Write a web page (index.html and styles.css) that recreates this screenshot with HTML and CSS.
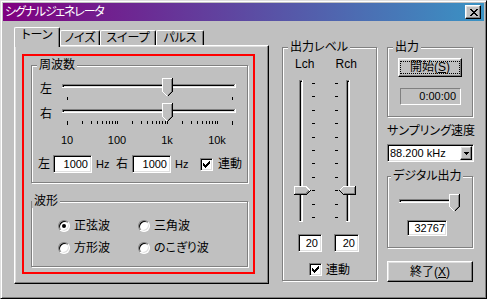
FILE: index.html
```html
<!DOCTYPE html>
<html>

	<head>
		<meta charset="UTF-8">
		<title>シグナルジェネレータ</title>
		<link rel="stylesheet" href="styles.css">
	</head>

	<body>
		<div class="window">
			<!--タイトルバー-->
			<div class="titlebar">
				<span class="title">シグナルジェネレータ</span>
				<span class="close-btn">
					<svg width="8" height="7" viewBox="0 0 8 7" shape-rendering="crispEdges"><path d="M0 0h2v1H0zM6 0h2v1H6zM1 1h2v1H1zM5 1h2v1H5zM2 2h4v1H2zM3 3h2v1H3zM2 4h4v1H2zM1 5h2v1H1zM5 5h2v1H5zM0 6h2v1H0zM6 6h2v1H6z" fill="#000"/></svg>
				</span>
			</div>
			<div class="client">
				<!--タブ-->
				<div class="tabctl">
					<div class="tabs">
						<div class="tab tab-tone">トーン</div>
						<div class="tab tab-noise">ノイズ</div>
						<div class="tab tab-sweep">スイープ</div>
						<div class="tab tab-pulse">パルス</div>
					</div>
					<div class="panel">
						<div class="redbox">
							<div class="group freq">
								<div class="group-title">周波数</div>
								<div class="slider-row">
									<span class="slider-label">左</span>
									<svg class="slider" width="182" height="25" shape-rendering="crispEdges">
										<rect x="4" y="8" width="174" height="4" fill="#fff"/>
										<rect x="4" y="8" width="173" height="3" fill="#808080"/>
										<rect x="5" y="9" width="172" height="2" fill="#dfdfdf"/>
										<rect x="5" y="9" width="171" height="1" fill="#000"/>
										<rect x="5" y="9" width="1" height="2" fill="#000"/>
										<g transform="translate(104 2)">
											<path d="M0 0H11V13L5.5 18.5L0 13Z" fill="#c0c0c0"/>
											<path d="M0.5 13.5V0.5H10" fill="none" stroke="#fff"/>
											<path d="M0.5 13.5L5 18" fill="none" stroke="#fff"/>
											<path d="M9.5 1V13.5L5.5 17.5" fill="none" stroke="#808080"/>
											<path d="M10.5 0V13.5L5.5 18.5" fill="none" stroke="#000"/>
										</g>
										<path d="M9.5 21v3M174.5 21v3" stroke="#000"/>
									</svg>
								</div>
								<div class="slider-row">
									<span class="slider-label">右</span>
									<svg class="slider" width="182" height="25" shape-rendering="crispEdges">
										<rect x="4" y="8" width="174" height="4" fill="#fff"/>
										<rect x="4" y="8" width="173" height="3" fill="#808080"/>
										<rect x="5" y="9" width="172" height="2" fill="#dfdfdf"/>
										<rect x="5" y="9" width="171" height="1" fill="#000"/>
										<rect x="5" y="9" width="1" height="2" fill="#000"/>
										<path d="M9.5 20v4M174.5 20v4M24.5 20v3M33.5 20v3M39.5 20v3M44.5 20v3M48.5 20v3M51.5 20v3M54.5 20v3M57.5 20v3M59.5 20v3M74.5 20v3M83.5 20v3M89.5 20v3M94.5 20v3M98.5 20v3M101.5 20v3M104.5 20v3M107.5 20v3M109.5 20v3M124.5 20v3M133.5 20v3M139.5 20v3M144.5 20v3M148.5 20v3M151.5 20v3M154.5 20v3M157.5 20v3M159.5 20v3" stroke="#000"/>
										<g transform="translate(104 2)">
											<path d="M0 0H11V13L5.5 18.5L0 13Z" fill="#c0c0c0"/>
											<path d="M0.5 13.5V0.5H10" fill="none" stroke="#fff"/>
											<path d="M0.5 13.5L5 18" fill="none" stroke="#fff"/>
											<path d="M9.5 1V13.5L5.5 17.5" fill="none" stroke="#808080"/>
											<path d="M10.5 0V13.5L5.5 18.5" fill="none" stroke="#000"/>
										</g>
									</svg>
								</div>
								<div class="scale">
									<span>10</span>
									<span>100</span>
									<span>1k</span>
									<span>10k</span>
								</div>
								<div class="freq-inputs">
									<span class="lbl-l">左</span>
									<span class="edit edit-freq">1000</span>
									<span class="unit unit-l">Hz</span>
									<span class="lbl-r">右</span>
									<span class="edit edit-freq">1000</span>
									<span class="unit unit-r">Hz</span>
									<span class="check">
										<svg width="9" height="9" shape-rendering="crispEdges"><path d="M1 3h1v3H1zM2 4h1v3H2zM3 5h1v3H3zM4 4h1v3H4zM5 3h1v3H5zM6 2h1v3H6zM7 1h1v3H7z" fill="#000"/></svg>
									</span>
									<span class="check-label">連動</span>
								</div>
							</div>
							<div class="group wave">
								<div class="group-title">波形</div>
								<div class="radio-row">
									<div class="radio-item"><span class="radio"><span class="dot"></span></span>正弦波</div>
									<div class="radio-item"><span class="radio"></span>三角波</div>
								</div>
								<div class="radio-row">
									<div class="radio-item"><span class="radio"></span>方形波</div>
									<div class="radio-item"><span class="radio"></span>のこぎり波</div>
								</div>
							</div>
						</div>
					</div>
				</div>

				<!--出力レベル-->
				<div class="group level">
					<div class="group-title">出力レベル</div>
					<div class="ch-labels">
						<span>Lch</span>
						<span>Rch</span>
					</div>
					<svg class="level-svg" width="72" height="150" shape-rendering="crispEdges">
						<rect x="9" y="4" width="4" height="142" fill="#fff"/>
						<rect x="9" y="4" width="3" height="141" fill="#808080"/>
						<rect x="10" y="5" width="2" height="140" fill="#dfdfdf"/>
						<rect x="10" y="5" width="1" height="140" fill="#000"/>
						<rect x="10" y="5" width="2" height="1" fill="#000"/>
						<rect x="56" y="4" width="4" height="142" fill="#fff"/>
						<rect x="56" y="4" width="3" height="141" fill="#808080"/>
						<rect x="57" y="5" width="2" height="140" fill="#dfdfdf"/>
						<rect x="57" y="5" width="1" height="140" fill="#000"/>
						<rect x="57" y="5" width="2" height="1" fill="#000"/>
						<path d="M22 7.5h3M22 20.5h3M22 34.5h3M22 47.5h3M22 61.5h3M22 74.5h3M22 87.5h3M22 101.5h3M22 114.5h3M22 128.5h3M22 141.5h3" stroke="#000"/>
						<path d="M45 7.5h3M45 20.5h3M45 34.5h3M45 47.5h3M45 61.5h3M45 74.5h3M45 87.5h3M45 101.5h3M45 114.5h3M45 128.5h3M45 141.5h3" stroke="#000"/>
						<g transform="translate(4 110)">
							<path d="M0 0H12L16.5 4.5L12 9H0Z" fill="#c0c0c0"/>
							<path d="M0.5 8.5V0.5H12L16 4.5" fill="none" stroke="#fff"/>
							<path d="M1 7.5H12L15 4.5" fill="none" stroke="#808080"/>
							<path d="M0 8.5H12.5L16.5 4.5" fill="none" stroke="#000"/>
						</g>
						<g transform="translate(49 110)">
							<path d="M0.5 4.5L5 0H17V9H5Z" fill="#c0c0c0"/>
							<path d="M0.5 4.5L4.5 0.5H16" fill="none" stroke="#fff"/>
							<path d="M15.5 1V7.5H5" fill="none" stroke="#808080"/>
							<path d="M16.5 0V8.5H4.5L0.5 4.5" fill="none" stroke="#000"/>
						</g>
					</svg>
					<div class="level-vals">
						<span class="edit edit-lv">20</span>
						<span class="edit edit-lv edit-lv-r">20</span>
					</div>
					<div class="level-link">
						<span class="check">
							<svg width="9" height="9" shape-rendering="crispEdges"><path d="M1 3h1v3H1zM2 4h1v3H2zM3 5h1v3H3zM4 4h1v3H4zM5 3h1v3H5zM6 2h1v3H6zM7 1h1v3H7z" fill="#000"/></svg>
						</span>
						<span class="check-label">連動</span>
					</div>
				</div>

				<!--右側-->
				<div class="side">
					<div class="group out">
						<div class="group-title">出力</div>
						<div class="btn btn-start"><span class="focus">開始(<u>S</u>)</span></div>
						<div class="timebox">0:00:00</div>
					</div>
					<div class="rate-label">サンプリング速度</div>
					<div class="combo">
						<span class="combo-text">88.200 kHz</span>
						<span class="combo-btn">
							<svg width="5" height="3" shape-rendering="crispEdges"><path d="M0 0h5v1H0zM1 1h3v1H1zM2 2h1v1H2z" fill="#000"/></svg>
						</span>
					</div>
					<div class="group digital">
						<div class="group-title">デジタル出力</div>
						<svg class="digital-svg" width="66" height="20" shape-rendering="crispEdges">
							<rect x="3" y="7" width="59" height="4" fill="#fff"/>
							<rect x="3" y="7" width="58" height="3" fill="#808080"/>
							<rect x="4" y="8" width="57" height="2" fill="#dfdfdf"/>
							<rect x="4" y="8" width="56" height="1" fill="#000"/>
							<rect x="4" y="8" width="1" height="2" fill="#000"/>
							<g transform="translate(53 2)">
								<path d="M0 0H11V12L5.5 17.5L0 12Z" fill="#c0c0c0"/>
								<path d="M0.5 12.5V0.5H10" fill="none" stroke="#fff"/>
								<path d="M0.5 12.5L5 17" fill="none" stroke="#fff"/>
								<path d="M9.5 1V12.5L5.5 16.5" fill="none" stroke="#808080"/>
								<path d="M10.5 0V12.5L5.5 17.5" fill="none" stroke="#000"/>
							</g>
						</svg>
						<div class="edit edit-dig">32767</div>
					</div>
					<div class="btn btn-quit">終了(<u>X</u>)</div>
				</div>
			</div>
		</div>
	</body>

</html>
```

FILE: styles.css
```css
* {
	margin: 0;
	padding: 0;
}

body {
	font-family: "Liberation Sans", "Noto Sans CJK JP", sans-serif;
	font-size: 12px;
	font-feature-settings: "palt";
	color: #000;
	background: #c0c0c0;
}

.window {
	width: 487px;
	height: 299px;
	box-sizing: border-box;
	padding: 2px;
	border: 1px solid;
	border-color: #dfdfdf #000 #000 #dfdfdf;
	box-shadow: inset 1px 1px #fff, inset -1px -1px #808080;
	background: #c0c0c0;
}

/*タイトルバー*/
.titlebar {
	height: 18px;
	display: flex;
	align-items: center;
	padding: 0 3px 0 2px;
	background: linear-gradient(to right, #800080, #3a93c4);
	color: #fff;
	line-height: 14px;
}

.title {
	letter-spacing: -1.2px;
}

.close-btn {
	margin-left: auto;
	width: 16px;
	height: 14px;
	box-sizing: border-box;
	padding: 3px 0 0 4px;
	border: 1px solid;
	border-color: #fff #000 #000 #fff;
	box-shadow: inset -1px -1px #808080, inset 1px 1px #dfdfdf;
	background: #c0c0c0;
}

.close-btn svg {
	display: block;
}

.client {
	display: flex;
	align-items: flex-start;
	height: 275px;
}

/*タブ*/
.tabctl {
	width: 255px;
	margin: 6px 0 0 11px;
}

.tabs {
	display: flex;
	align-items: flex-end;
	height: 18px;
}

.tab {
	box-sizing: border-box;
	height: 15px;
	border: 1px solid;
	border-bottom: none;
	border-color: #fff #000 #000 #fff;
	border-radius: 2px 2px 0 0;
	box-shadow: inset -1px 0 #808080;
	text-align: center;
	line-height: 14px;
}

.tab-tone {
	width: 46px;
	height: 20px;
	margin-bottom: -2px;
	position: relative;
	z-index: 1;
	background: #c0c0c0;
}

.tab-noise {
	width: 40px;
}

.tab-sweep {
	width: 56px;
}

.tab-pulse {
	width: 48px;
}

.panel {
	box-sizing: border-box;
	height: 239px;
	padding: 8px 0 0 7px;
	border: 1px solid;
	border-color: #fff #000 #000 #fff;
	box-shadow: inset -1px -1px #808080, inset 1px 1px #dfdfdf;
}

.redbox {
	box-sizing: border-box;
	width: 233px;
	height: 220px;
	padding: 9px 0 0 7px;
	border: 2px solid #f00;
}

/*グループ枠*/
.group {
	box-sizing: border-box;
	border: 1px solid #808080;
	box-shadow: inset 1px 1px #fff, 1px 1px #fff;
}

.group-title {
	width: fit-content;
	height: 14px;
	margin-top: -8px;
	padding: 0 2px;
	line-height: 14px;
	background: #c0c0c0;
}

.freq {
	width: 217px;
	height: 118px;
}

.freq .group-title {
	margin-left: 5px;
}

.slider-row {
	display: flex;
	align-items: center;
	height: 25px;
	padding-left: 8px;
}

.freq .group-title + .slider-row {
	margin-top: 4px;
}

.slider-label {
	width: 18px;
	line-height: 14px;
}

.slider-row svg {
	display: block;
}

.scale {
	display: flex;
	padding-left: 10px;
	margin-top: 7px;
	font-size: 11px;
	line-height: 14px;
}

.scale span {
	width: 50px;
	text-align: center;
}

.freq-inputs {
	display: flex;
	align-items: center;
	height: 18px;
	margin-top: 8px;
	padding-left: 6px;
	line-height: 14px;
}

.lbl-l {
	width: 15px;
}

.lbl-r {
	width: 16px;
}

.unit {
	box-sizing: border-box;
	padding-left: 4px;
	font-size: 11px;
}

.unit-l {
	width: 24px;
}

.unit-r {
	width: 29px;
}

.edit {
	display: block;
	box-sizing: border-box;
	height: 18px;
	padding-right: 3px;
	border: 1px solid;
	border-color: #808080 #fff #fff #808080;
	box-shadow: inset 1px 1px #000, inset -1px -1px #dfdfdf;
	background: #fff;
	font-size: 11px;
	line-height: 16px;
	text-align: right;
}

.edit-freq {
	width: 39px;
}

.check {
	display: block;
	box-sizing: border-box;
	width: 13px;
	height: 13px;
	padding: 1px;
	border: 1px solid;
	border-color: #808080 #fff #fff #808080;
	box-shadow: inset 1px 1px #000, inset -1px -1px #dfdfdf;
	background: #fff;
}

.check svg {
	display: block;
}

.check-label {
	margin-left: 5px;
	line-height: 14px;
}

/*波形*/
.wave {
	width: 217px;
	height: 66px;
	margin-top: 18px;
}

.radio-row {
	display: flex;
	height: 14px;
	margin-top: 8px;
	padding-left: 26px;
	line-height: 14px;
}

.wave .group-title + .radio-row {
	margin-top: 11px;
}

.radio-item {
	display: flex;
	align-items: center;
	width: 80px;
}

.radio {
	display: flex;
	align-items: center;
	justify-content: center;
	box-sizing: border-box;
	width: 12px;
	height: 12px;
	margin-right: 4px;
	border: 1px solid;
	border-color: #808080 #fff #fff #808080;
	border-radius: 50%;
	box-shadow: inset 1px 1px #000, inset -1px -1px #dfdfdf;
	background: #fff;
}

.radio .dot {
	width: 4px;
	height: 4px;
	border-radius: 50%;
	background: #000;
}

/*出力レベル*/
.level {
	width: 95px;
	height: 234px;
	margin: 26px 0 0 13px;
}

.level .group-title {
	margin-left: 5px;
}

.ch-labels {
	display: flex;
	margin-top: 3px;
	padding-left: 12px;
	line-height: 14px;
}

.ch-labels span {
	width: 42px;
}

.level-svg {
	display: block;
	margin: 5px 0 0 7px;
}

.level-vals {
	display: flex;
	margin-top: 8px;
	padding-left: 15px;
}

.edit-lv {
	width: 24px;
}

.edit-lv-r {
	width: 25px;
	margin-left: 12px;
}

.level-link {
	display: flex;
	align-items: center;
	height: 13px;
	margin-top: 11px;
	padding-left: 26px;
}

.level-link .check-label {
	margin-left: 4px;
}

/*右側*/
.side {
	width: 86px;
	margin: 26px 0 0 10px;
}

.out {
	height: 70px;
}

.out .group-title {
	margin-left: 5px;
}

.btn {
	display: flex;
	align-items: center;
	justify-content: center;
	box-sizing: border-box;
	border: 1px solid;
	border-color: #fff #000 #000 #fff;
	box-shadow: inset -1px -1px #808080, inset 1px 1px #dfdfdf;
	background: #c0c0c0;
	line-height: 14px;
}

.btn-start {
	width: 64px;
	height: 19px;
	margin: 4px 0 0 10px;
	align-items: stretch;
}

.btn-start .focus {
	flex: 1;
	margin: 2px 1px 2px 1px;
	border: 1px dotted #000;
	text-align: center;
	line-height: 11px;
}

.timebox {
	box-sizing: border-box;
	width: 61px;
	height: 17px;
	margin: 11px 0 0 12px;
	padding-right: 4px;
	border: 1px solid;
	border-color: #808080 #fff #fff #808080;
	font-size: 11px;
	line-height: 15px;
	text-align: right;
}

.rate-label {
	margin-top: 7px;
	line-height: 14px;
	white-space: nowrap;
}

.combo {
	display: flex;
	align-items: center;
	box-sizing: border-box;
	width: 87px;
	height: 18px;
	margin-top: 6px;
	padding: 1px;
	border: 1px solid;
	border-color: #808080 #fff #fff #808080;
	box-shadow: inset 1px 1px #000, inset -1px -1px #dfdfdf;
	background: #fff;
	font-size: 11px;
}

.combo-text {
	padding-left: 1px;
}

.combo-btn {
	display: flex;
	align-items: center;
	justify-content: center;
	box-sizing: border-box;
	width: 12px;
	height: 14px;
	margin-left: auto;
	border: 1px solid;
	border-color: #fff #000 #000 #fff;
	box-shadow: inset -1px -1px #808080, inset 1px 1px #dfdfdf;
	background: #c0c0c0;
}

.combo-btn svg {
	display: block;
}

.digital {
	height: 72px;
	margin-top: 14px;
}

.digital .group-title {
	margin-left: 3px;
}

.digital-svg {
	display: block;
	margin: 9px 0 0 8px;
}

.edit-dig {
	width: 40px;
	height: 16px;
	margin: 8px 0 0 19px;
	padding-right: 1px;
	line-height: 14px;
}

.btn-quit {
	width: 86px;
	height: 21px;
	margin-top: 13px;
}
```
